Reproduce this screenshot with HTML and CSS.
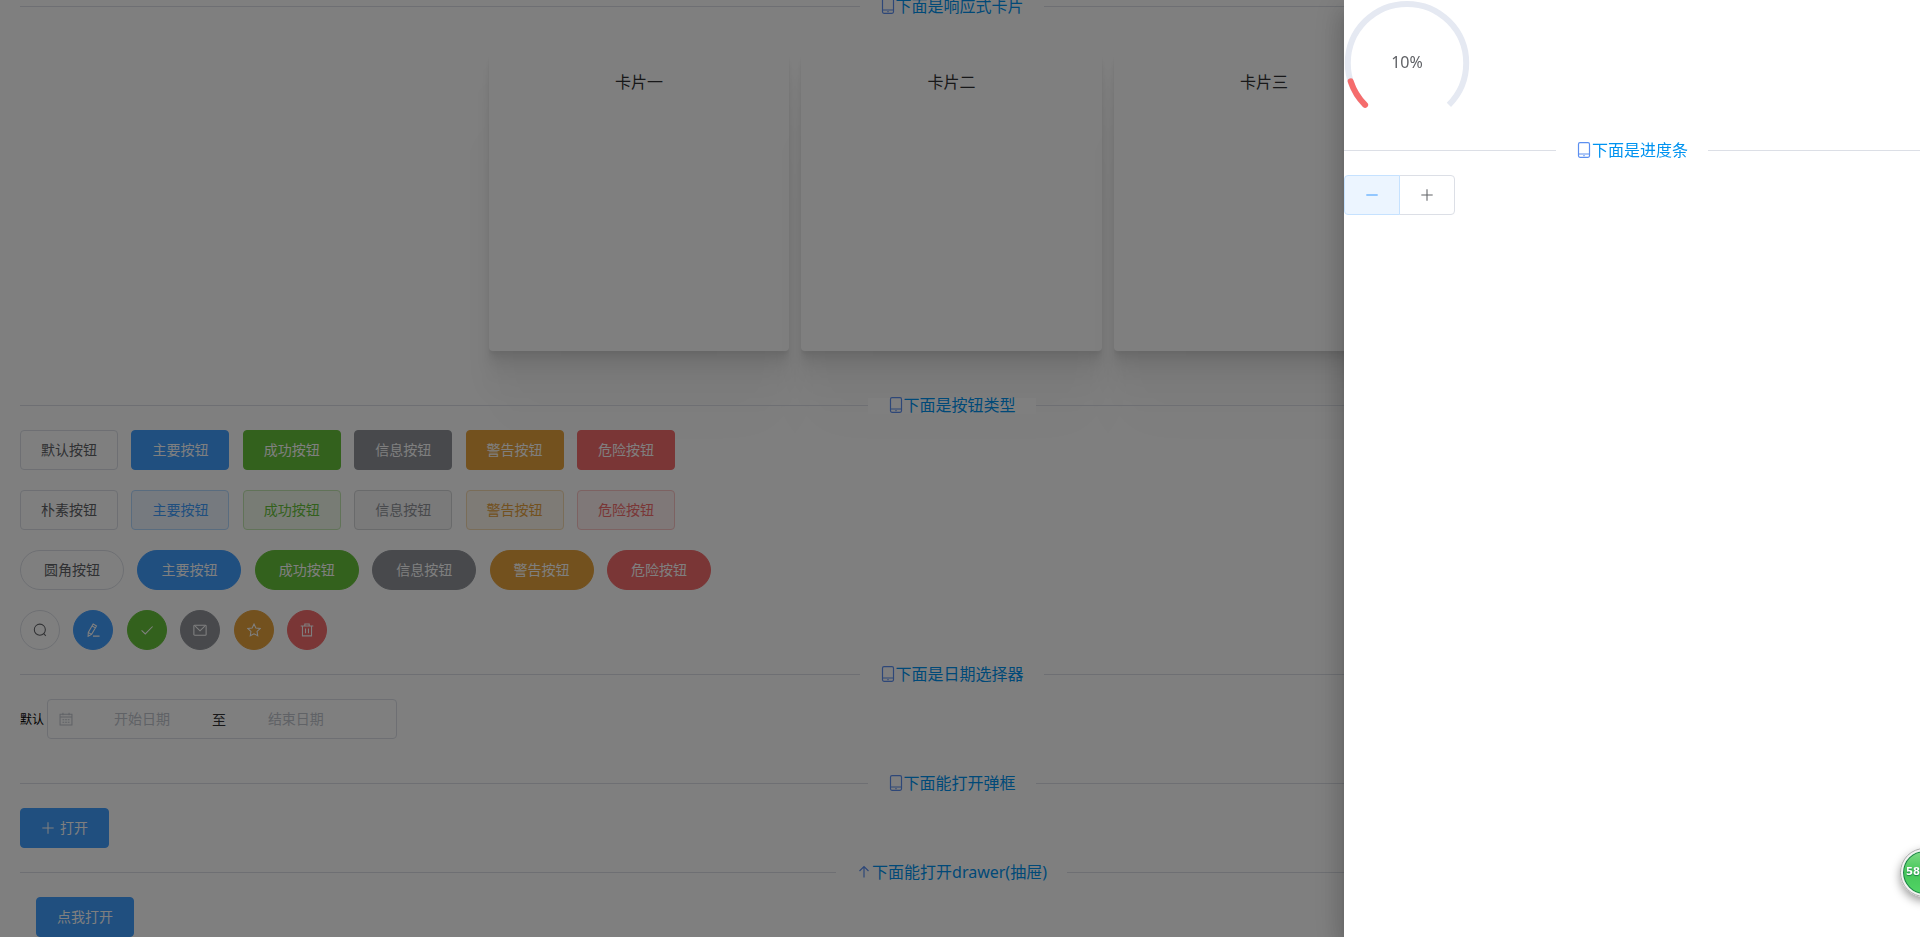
FILE: index.html
```html
<!DOCTYPE html>
<html lang="zh-CN">

<head>
    <meta charset="UTF-8">
    <meta name="viewport" content="width=device-width, initial-scale=1.0">
    <title>Element UI</title>
    <link rel="stylesheet" href="styles.css">
</head>

<body>
    <!-- icon set -->
    <svg class="icon-defs" aria-hidden="true">
        <symbol id="phone" viewBox="0 0 16 16">
            <rect x="2.5" y=".7" width="11" height="14.6" rx="1.5" />
            <path d="M2.5 12h11M7.4 13.7h1.2" />
        </symbol>
        <symbol id="top" viewBox="0 0 16 16">
            <path d="M8 13.5v-11M3.5 7L8 2.5 12.5 7" />
        </symbol>
        <symbol id="search" viewBox="0 0 16 16">
            <circle cx="7.8" cy="7.6" r="6.3" />
            <path d="M12.2 12l2.4 2.6" />
        </symbol>
        <symbol id="edit" viewBox="0 0 16 16">
            <path d="M8.2 1.2l3.8 2.2-5.6 9.6-4 2.2.2-4.4zM7 3.4l3.8 2.2M2.6 10.8l3.8 2.2M8 15h7.5" />
        </symbol>
        <symbol id="check" viewBox="0 0 16 16">
            <path d="M1.8 8.5l4.2 4L14.4 4" />
        </symbol>
        <symbol id="message" viewBox="0 0 16 16">
            <rect x="1" y="2.5" width="14" height="11.5" rx="1" />
            <path d="M2.5 3.5L8 9l5.5-5.5" />
        </symbol>
        <symbol id="star" viewBox="0 0 16 16">
            <path d="M8 1.2l2.1 4.4 4.9.7-3.5 3.4.8 4.9L8 12.3l-4.3 2.3.8-4.9L1 6.3l4.9-.7z" />
        </symbol>
        <symbol id="delete" viewBox="0 0 16 16">
            <path d="M.8 3.5h14.4M2.8 3.5v11.2h10.4V3.5M5.5 3.2v-2h5v2M6.3 6.3v5.5M9.7 6.3v5.5" />
        </symbol>
        <symbol id="date" viewBox="0 0 16 16">
            <path d="M1.2 2.5h13.6v12.3H1.2zM1.2 5.8h13.6M4.5.8v3M11.5.8v3M4 8.8h2M7 8.8h2M10 8.8h2M4 11.8h2M7 11.8h2M10 11.8h2" />
        </symbol>
        <symbol id="plus" viewBox="0 0 16 16">
            <path d="M8 1.5v13M1.5 8h13" />
        </symbol>
        <symbol id="minus" viewBox="0 0 16 16">
            <path d="M1.5 8h13" />
        </symbol>
    </svg>

    <main class="page">
        <div class="divider"><span class="divider-text"><svg class="icon"><use href="#phone" /></svg>下面是响应式卡片</span></div>
        <div class="card-row">
            <div class="card-col"><div class="card">卡片一</div></div>
            <div class="card-col"><div class="card">卡片二</div></div>
            <div class="card-col"><div class="card">卡片三</div></div>
        </div>

        <div class="divider"><span class="divider-text"><svg class="icon"><use href="#phone" /></svg>下面是按钮类型</span></div>
        <div class="btn-row">
            <button type="button" class="btn">默认按钮</button>
            <button type="button" class="btn primary">主要按钮</button>
            <button type="button" class="btn success">成功按钮</button>
            <button type="button" class="btn info">信息按钮</button>
            <button type="button" class="btn warning">警告按钮</button>
            <button type="button" class="btn danger">危险按钮</button>
        </div>
        <div class="btn-row">
            <button type="button" class="btn plain">朴素按钮</button>
            <button type="button" class="btn primary plain">主要按钮</button>
            <button type="button" class="btn success plain">成功按钮</button>
            <button type="button" class="btn info plain">信息按钮</button>
            <button type="button" class="btn warning plain">警告按钮</button>
            <button type="button" class="btn danger plain">危险按钮</button>
        </div>
        <div class="btn-row">
            <button type="button" class="btn round">圆角按钮</button>
            <button type="button" class="btn primary round">主要按钮</button>
            <button type="button" class="btn success round">成功按钮</button>
            <button type="button" class="btn info round">信息按钮</button>
            <button type="button" class="btn warning round">警告按钮</button>
            <button type="button" class="btn danger round">危险按钮</button>
        </div>
        <div class="btn-row last">
            <button type="button" class="btn circle" aria-label="搜索"><svg class="icon"><use href="#search" /></svg></button>
            <button type="button" class="btn primary circle" aria-label="编辑"><svg class="icon"><use href="#edit" /></svg></button>
            <button type="button" class="btn success circle" aria-label="确定"><svg class="icon"><use href="#check" /></svg></button>
            <button type="button" class="btn info circle" aria-label="消息"><svg class="icon"><use href="#message" /></svg></button>
            <button type="button" class="btn warning circle" aria-label="收藏"><svg class="icon"><use href="#star" /></svg></button>
            <button type="button" class="btn danger circle" aria-label="删除"><svg class="icon"><use href="#delete" /></svg></button>
        </div>

        <div class="divider"><span class="divider-text"><svg class="icon"><use href="#phone" /></svg>下面是日期选择器</span></div>
        <div class="date-row">
            <label for="startDate">默认</label>
            <div class="date-editor">
                <svg class="icon"><use href="#date" /></svg>
                <input type="text" id="startDate" name="startDate" placeholder="开始日期">
                <span class="separator">至</span>
                <input type="text" id="endDate" name="endDate" placeholder="结束日期" aria-label="结束日期">
            </div>
        </div>

        <div class="divider"><span class="divider-text"><svg class="icon"><use href="#phone" /></svg>下面能打开弹框</span></div>
        <div class="btn-row last">
            <button type="button" class="btn primary"><svg class="icon"><use href="#plus" /></svg><span>打开</span></button>
        </div>

        <div class="divider"><span class="divider-text"><svg class="icon"><use href="#top" /></svg>下面能打开drawer(抽屉)</span></div>
        <div class="btn-row last indent">
            <button type="button" class="btn primary">点我打开</button>
        </div>
    </main>

    <div class="mask"></div>

    <aside class="drawer">
        <div class="progress">
            <!-- 270deg arc, 10% of it filled -->
            <svg viewBox="0 0 126 126">
                <path class="track" d="M21.1 104.9a59.2 59.2 0 1 1 83.8 0" />
                <path class="bar" pathLength="100" stroke-dasharray="10 100" d="M21.1 104.9a59.2 59.2 0 1 1 83.8 0" />
            </svg>
            <span class="progress-text">10%</span>
        </div>
        <div class="divider"><span class="divider-text"><svg class="icon"><use href="#phone" /></svg>下面是进度条</span></div>
        <div class="btn-group">
            <button type="button" class="btn active" aria-label="减少"><svg class="icon"><use href="#minus" /></svg></button>
            <button type="button" class="btn" aria-label="增加"><svg class="icon"><use href="#plus" /></svg></button>
        </div>
    </aside>

    <div class="float-ball">58%</div>
</body>

</html>
```

FILE: styles.css
```css
body {
    font-family: "Noto Sans", "Noto Sans CJK SC", sans-serif;
    font-size: 13px;
    height: 100vh;
    margin: 0;
    overflow: hidden;
    background-color: #fff;
}

.icon-defs {
    display: none;
}

.icon {
    width: 1em;
    height: 1em;
    fill: none;
    stroke: currentColor;
    stroke-width: 1.2;
    flex: none;
}

.page {
    padding: 6px 37px 0 20px;
}

.divider {
    display: flex;
    align-items: center;
    height: 1px;
    margin: 24px 0;
}

.page > .divider:first-child {
    margin-top: 0;
}

.divider::before,
.divider::after {
    content: "";
    flex: 1;
    height: 1px;
    background-color: #dcdfe6;
}

.divider-text {
    display: flex;
    align-items: center;
    padding: 0 20px 2px;
    font-size: 16px;
    line-height: 14px;
    color: #0093f0;
    background-color: #fff;
}

.divider-text .icon {
    margin: -1px 0;
    color: #5c8ff0;
}

/* cards */
.card-row {
    display: flex;
    margin: 0 -6px;
    padding: 20px 0 30px;
}

.card-col {
    flex: 0 0 16.6667%;
    box-sizing: border-box;
    padding: 0 6px;
}

.card-col:first-child {
    margin-left: 25%;
}

.card {
    box-sizing: border-box;
    height: 300px;
    padding: 20px;
    border-radius: 4px;
    background-color: #fff;
    color: #303133;
    font-size: 16px;
    line-height: 22px;
    text-align: center;
    box-shadow: 0 3px 2px rgba(0, 0, 0, 0.03), 0 7px 5px rgba(0, 0, 0, 0.04), 0 13px 10px rgba(0, 0, 0, 0.04),
        0 22px 18px rgba(0, 0, 0, 0.04), 0 42px 33px rgba(0, 0, 0, 0.03), 0 80px 60px rgba(0, 0, 0, 0.02);
}

/* buttons */
.btn-row {
    margin-bottom: 20px;
}

.btn-row.last {
    margin-bottom: 0;
}

.indent {
    padding-left: 16px;
}

.btn {
    display: inline-flex;
    align-items: center;
    gap: 5px;
    margin: 0;
    padding: 12px 20px;
    border: 1px solid #dcdfe6;
    border-radius: 4px;
    background-color: #fff;
    color: #606266;
    font-family: inherit;
    font-size: 14px;
    line-height: 14px;
    vertical-align: top;
    cursor: pointer;
}

.btn + .btn {
    margin-left: 10px;
}

.btn.round {
    padding: 12px 23px;
    border-radius: 20px;
}

.btn.circle {
    padding: 12px;
    border-radius: 50%;
}

.primary {
    color: #fff;
    background-color: #409eff;
    border-color: #409eff;
}

.success {
    color: #fff;
    background-color: #67c23a;
    border-color: #67c23a;
}

.info {
    color: #fff;
    background-color: #909399;
    border-color: #909399;
}

.warning {
    color: #fff;
    background-color: #e6a23c;
    border-color: #e6a23c;
}

.danger {
    color: #fff;
    background-color: #f56c6c;
    border-color: #f56c6c;
}

.primary.plain {
    color: #409eff;
    background-color: #ecf5ff;
    border-color: #b3d8ff;
}

.success.plain {
    color: #67c23a;
    background-color: #f0f9eb;
    border-color: #c2e7b0;
}

.info.plain {
    color: #909399;
    background-color: #f4f4f5;
    border-color: #d3d4d6;
}

.warning.plain {
    color: #e6a23c;
    background-color: #fdf6ec;
    border-color: #f5dab1;
}

.danger.plain {
    color: #f56c6c;
    background-color: #fef0f0;
    border-color: #fbc4c4;
}

/* date picker */
.date-row {
    display: flex;
    align-items: center;
    gap: 3px;
    margin-bottom: 44px;
    font-size: 12px;
}

.date-editor {
    display: flex;
    align-items: center;
    box-sizing: border-box;
    width: 350px;
    height: 40px;
    padding: 0 10px;
    border: 1px solid #dcdfe6;
    border-radius: 4px;
    background-color: #fff;
    font-size: 14px;
}

.date-editor .icon {
    margin: 0 5px 0 1px;
    color: #c0c4cc;
}

.date-editor input {
    box-sizing: border-box;
    width: 39%;
    padding: 0 0 2px;
    border: none;
    outline: none;
    background: none;
    font-family: inherit;
    font-size: 14px;
    text-align: center;
}

.date-editor input::placeholder {
    color: #c0c4cc;
}

.separator {
    width: 26px;
    color: #303133;
    text-align: center;
}

/* drawer */
.mask {
    position: fixed;
    inset: 0;
    background-color: rgba(0, 0, 0, 0.5);
}

.drawer {
    position: fixed;
    top: 0;
    right: 0;
    bottom: 0;
    width: 30%;
    background-color: #fff;
    box-shadow: 0 8px 10px -5px rgba(0, 0, 0, 0.2), 0 16px 24px 2px rgba(0, 0, 0, 0.14), 0 6px 30px 5px rgba(0, 0, 0, 0.12);
}

.progress {
    display: grid;
    place-items: center;
    width: 126px;
    height: 126px;
}

.progress svg,
.progress-text {
    grid-area: 1 / 1;
}

.progress svg {
    width: 126px;
    height: 126px;
    fill: none;
    stroke-width: 6;
}

.track {
    stroke: #e5e9f2;
}

.bar {
    stroke: #f56c6c;
    stroke-linecap: round;
}

.progress-text {
    padding-bottom: 2px;
    color: #606266;
    font-size: 16px;
    line-height: 16px;
}

.btn-group {
    display: flex;
}

.btn-group .btn + .btn {
    margin-left: -1px;
    border-radius: 0 4px 4px 0;
}

.btn-group .btn.active {
    z-index: 1;
    border-radius: 4px 0 0 4px;
    color: #409eff;
    background-color: #ecf5ff;
    border-color: #c6e2ff;
}

/* green ball stuck to the window edge */
.float-ball {
    position: fixed;
    right: -29px;
    bottom: 40px;
    box-sizing: border-box;
    width: 49px;
    height: 49px;
    padding-left: 3px;
    border: 3px solid #f2f2f2;
    border-radius: 50%;
    outline: 1px solid #aaa;
    outline-offset: -1px;
    background: linear-gradient(#7edb86, #45c659 50%, #52d566);
    box-shadow: inset 0 0 0 1px #1e7d4c, 0 4px 10px rgba(0, 0, 0, 0.4);
    color: #fff;
    font: bold 10px/42px "DejaVu Sans", sans-serif;
    text-shadow: 0 1px 1px #1e7d4c;
}
```
